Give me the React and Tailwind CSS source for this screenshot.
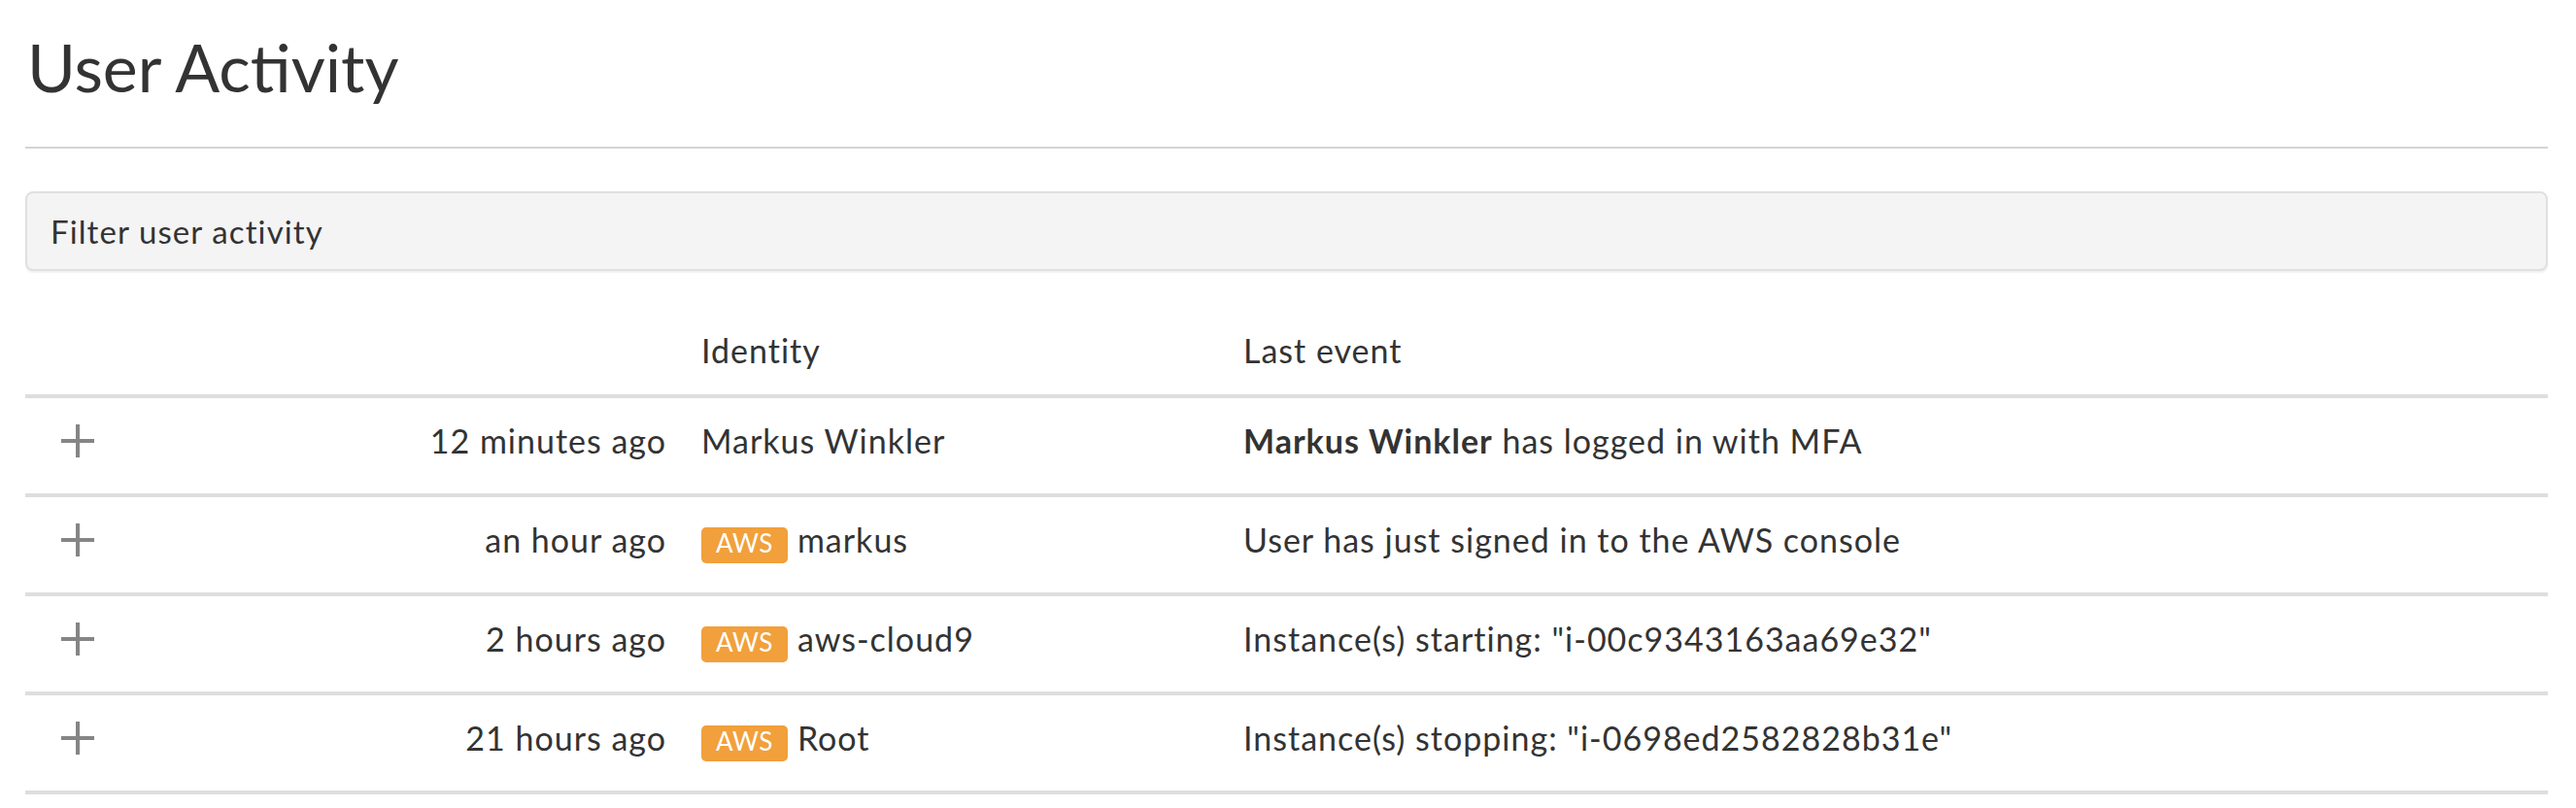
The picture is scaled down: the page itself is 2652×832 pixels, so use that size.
import React from 'react';

const rows = [
  { time: '12 minutes ago', aws: false, identity: 'Markus Winkler', event: (<><span className="font-bold">Markus Winkler</span> has logged in with MFA</>) },
  { time: 'an hour ago', aws: true, identity: 'markus', event: 'User has just signed in to the AWS console' },
  { time: '2 hours ago', aws: true, identity: 'aws-cloud9', event: 'Instance(s) starting: "i-00c9343163aa69e32"' },
  { time: '21 hours ago', aws: true, identity: 'Root', event: 'Instance(s) stopping: "i-0698ed2582828b31e"' },
];

function Plus() {
  return (
    <svg width="34" height="34" viewBox="0 0 34 34" className="block">
      <rect x="15" y="0" width="4" height="34" fill="#858585" />
      <rect x="0" y="15" width="34" height="4" fill="#858585" />
    </svg>
  );
}

function AwsBadge() {
  return (
    <span className="-my-[5px] mr-[10px] inline-block rounded-[5px] bg-[#f1a03b] px-[15px] pt-[1px] pb-[5px] align-baseline text-[26px] leading-[31px] tracking-[0.5px] text-white">
      AWS
    </span>
  );
}

export default function App() {
  return (
    <div className="min-h-screen bg-white pl-[26px] pr-[29px] font-['Lato',sans-serif] text-[#333333]">
      <h1 className="pl-[2px] pt-[28px] text-[68px] leading-[1.2] font-normal">User Activity</h1>
      <div className="mt-[41px] border-t-2 border-[#d4d4d4]" />

      <div className="mt-[44px] rounded-[8px] border-2 border-[#e0e0e0] bg-[#f4f4f4] py-[20px] pl-[24px] text-[33px] leading-[38px] tracking-[1.1px] shadow-[0_2px_2px_rgba(0,0,0,0.06)]">
        Filter user activity
      </div>

      <div className="mt-[62px] text-[34px] leading-[40px] tracking-[1px]">
        <div className="grid grid-cols-[120px_558px_558px_1fr] border-b-4 border-[#dedede] pb-[25px]">
          <div />
          <div />
          <div className="pl-[18px]">Identity</div>
          <div className="pl-[18px]">Last event</div>
        </div>
        {rows.map((r, i) => (
          <div key={i} className="grid grid-cols-[120px_558px_558px_1fr] border-b-4 border-[#dedede] pt-[24px] pb-[34px]">
            <div className="flex h-[40px] items-center pl-[37px]">
              <Plus />
            </div>
            <div className="pr-[18px] text-right">{r.time}</div>
            <div className="whitespace-nowrap pl-[18px]">
              {r.aws && <AwsBadge />}
              {r.identity}
            </div>
            <div className="whitespace-nowrap pl-[18px]">{r.event}</div>
          </div>
        ))}
      </div>
    </div>
  );
}
